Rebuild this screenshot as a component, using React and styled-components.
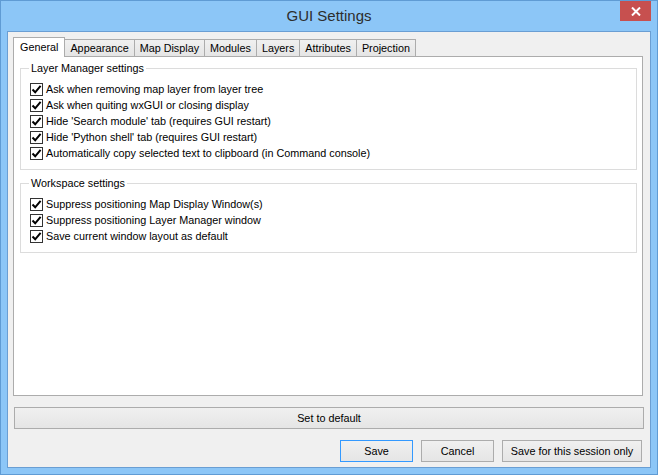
import React from 'react'
import styled, { createGlobalStyle } from 'styled-components'

const GlobalStyle = createGlobalStyle`
  html, body { margin: 0; padding: 0; }
  body {
    width: 658px;
    height: 475px;
    overflow: hidden;
    font-family: "Liberation Sans", Arial, sans-serif;
  }
`

const Window = styled.div`
  width: 658px;
  height: 475px;
  box-sizing: border-box;
  background: #8cc6f7;
  border: 1px solid #5f9bd4;
  display: flex;
  flex-direction: column;
`

const TitleBar = styled.div`
  position: relative;
  height: 30px;
  flex: none;
  display: flex;
  align-items: center;
  justify-content: center;
  font-size: 15px;
  color: #2d2d2d;
  padding-bottom: 1px;
  box-sizing: border-box;
`

const CloseButton = styled.div`
  position: absolute;
  top: 0;
  right: 6px;
  width: 31px;
  height: 20px;
  background: #c7504f;
  display: flex;
  align-items: center;
  justify-content: center;
`

const Client = styled.div`
  flex: 1;
  margin: 0 6px 6px 6px;
  border: 1px solid #6a9ed3;
  background: #f0f0f0;
  display: flex;
  flex-direction: column;
  padding: 5px 7px 5px 5px;
  font-size: 10.8px;
  color: #000;
`

const TabBar = styled.div`
  display: flex;
  align-items: flex-end;
  height: 19px;
  position: relative;
  z-index: 1;
`

const Tab = styled.div`
  box-sizing: border-box;
  border: 1px solid #acacac;
  border-bottom: none;
  margin-left: -1px;
  padding: 0 5px;
  display: flex;
  align-items: center;
  white-space: nowrap;
  height: ${p => (p.$active ? '20px' : '17px')};
  margin-bottom: ${p => (p.$active ? '-1px' : '0')};
  background: ${p => (p.$active ? '#ffffff' : 'linear-gradient(#f0f0f0, #e5e5e5)')};
  padding-bottom: ${p => (p.$active ? '2px' : '0')};
  &:first-child { margin-left: 0; padding: 0 6px 2px 6px; }
`

const Panel = styled.div`
  flex: 1;
  background: #fff;
  border: 1px solid #acacac;
  padding: 3px 5px 0 6px;
`

const Group = styled.fieldset`
  margin: 0 0 5px 0;
  border: 1px solid #dcdcdc;
  padding: 5px 9px 8px 9px;
`

const Legend = styled.legend`
  padding: 0 2px;
  margin-left: -1px;
  line-height: 16px;
`

const Row = styled.label`
  display: flex;
  align-items: center;
  height: 16px;
  gap: 3px;
  white-space: nowrap;
`

const Box = styled.span`
  width: 13px;
  height: 13px;
  box-sizing: border-box;
  border: 1px solid #333;
  background: #fff;
  display: flex;
  align-items: center;
  justify-content: center;
  flex: none;
`

const WideButton = styled.div`
  margin: 11px -1px 0 1px;
  height: 22px;
  box-sizing: border-box;
  border: 1px solid #acacac;
  background: linear-gradient(#f0f0f0, #e5e5e5);
  display: flex;
  align-items: center;
  justify-content: center;
`

const ButtonRow = styled.div`
  margin-top: 11px;
  display: flex;
  justify-content: flex-end;
  gap: 8px;
  padding-right: 1px;
`

const Button = styled.div`
  width: ${p => p.$w}px;
  height: 22px;
  box-sizing: border-box;
  border: 1px solid ${p => (p.$primary ? '#3399ff' : '#acacac')};
  background: linear-gradient(#f0f0f0, #e5e5e5);
  display: flex;
  align-items: center;
  justify-content: center;
`

function Check({ label }) {
  return (
    <Row>
      <Box>
        <svg width="11" height="11" viewBox="0 0 11 11">
          <path d="M1.5 5.5 L4.2 8.3 L9.6 1.8" fill="none" stroke="#000" strokeWidth="2" />
        </svg>
      </Box>
      {label}
    </Row>
  )
}

const tabs = ['General', 'Appearance', 'Map Display', 'Modules', 'Layers', 'Attributes', 'Projection']

const layerItems = [
  'Ask when removing map layer from layer tree',
  'Ask when quiting wxGUI or closing display',
  "Hide 'Search module' tab (requires GUI restart)",
  "Hide 'Python shell' tab (requires GUI restart)",
  'Automatically copy selected text to clipboard (in Command console)',
]

const workspaceItems = [
  'Suppress positioning Map Display Window(s)',
  'Suppress positioning Layer Manager window',
  'Save current window layout as default',
]

export default function App() {
  return (
    <>
      <GlobalStyle />
      <Window>
        <TitleBar>
          GUI Settings
          <CloseButton>
            <svg width="10" height="9" viewBox="0 0 10 9">
              <path d="M1 0.5 L9 8.5 M9 0.5 L1 8.5" stroke="#fff" strokeWidth="2" />
            </svg>
          </CloseButton>
        </TitleBar>
        <Client>
          <TabBar>
            {tabs.map((t, i) => (
              <Tab key={t} $active={i === 0}>{t}</Tab>
            ))}
          </TabBar>
          <Panel>
            <Group>
              <Legend>Layer Manager settings</Legend>
              {layerItems.map(l => <Check key={l} label={l} />)}
            </Group>
            <Group>
              <Legend>Workspace settings</Legend>
              {workspaceItems.map(l => <Check key={l} label={l} />)}
            </Group>
          </Panel>
          <WideButton>Set to default</WideButton>
          <ButtonRow>
            <Button $w={73} $primary>Save</Button>
            <Button $w={73}>Cancel</Button>
            <Button $w={140}>Save for this session only</Button>
          </ButtonRow>
        </Client>
      </Window>
    </>
  )
}
